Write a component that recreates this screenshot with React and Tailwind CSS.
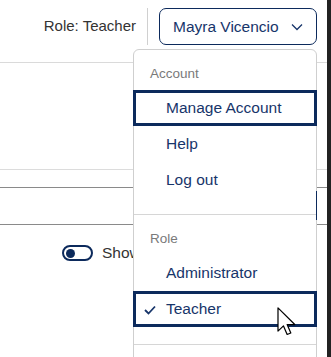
import React from "react";

const navy = "border-[#0c2a5c]";

const MenuHeader = ({ label }) => (
    <div className="pl-[16px] pt-[15px] pb-[8px] text-[13.5px] leading-[17px] text-[#7a7a7a]">{label}</div>
);

const MenuItem = ({ label, selected, checked }) => (
    <div
        className={`relative -mx-px h-[36px] flex items-center pl-[30px] text-[15.5px] text-[#17356a] border-[3px] ${
            selected ? navy : "border-transparent"
        }`}
    >
        {checked && (
            <svg className="absolute left-[8px] top-[11px]" width="12" height="10" viewBox="0 0 12 10">
                <polyline points="1,5 4.5,8.5 11,1.5" fill="none" stroke="#17356a" strokeWidth="1.8" />
            </svg>
        )}
        {label}
    </div>
);

const Cursor = () => (
    <svg className="absolute left-[277px] top-[307px]" width="20" height="29" viewBox="0 0 13 19">
        <path d="M0.6 0.6 L0.6 15.8 L4.2 12.4 L6.6 18 L9 17 L6.6 11.5 L11.6 11.5 Z" fill="#fff" stroke="#000" strokeWidth="0.8" strokeLinejoin="round" />
    </svg>
);

export default function App() {
    return (
        <div className="relative w-[331px] h-[357px] overflow-hidden bg-white flex font-['Liberation_Sans',Arial,sans-serif]">
            <div className="flex-1 flex flex-col">
                {/* top bar */}
                <div className="h-[63px] border-b border-[#dadada] flex items-start justify-end pt-[8px] pr-[10px]">
                    <div className="h-[37px] flex items-center text-[15px] text-[#333]">Role: Teacher</div>
                    <div className="w-px h-[37px] bg-[#d0d0d0] mx-[11px]" />
                    <button className={`h-[37px] w-[158px] border-[1.5px] ${navy} rounded-[7px] flex items-center pl-[13px] text-[15.5px] text-[#17356a]`}>
                        Mayra Vicencio
                        <svg className="ml-[12px]" width="12" height="8" viewBox="0 0 12 8">
                            <polyline points="1,1.5 6,6.5 11,1.5" fill="none" stroke="#17356a" strokeWidth="1.3" />
                        </svg>
                    </button>
                </div>

                {/* page content behind the menu */}
                <div className="mt-[106px] border-t border-[#dcdcdc] h-[18px]" />
                <div className="border-t border-[#8a8a8a] h-[37px]" />
                <div className="border-t border-[#8a8a8a] pt-[20px] pl-[62px] flex items-center gap-[9px]">
                    <div className={`w-[31px] h-[16px] border-2 ${navy} rounded-full flex items-center px-[2px]`}>
                        <div className="w-[9px] h-[9px] rounded-full bg-[#0c2a5c]" />
                    </div>
                    <span className="text-[15.5px] leading-[16px] text-[#333]">Show</span>
                </div>
            </div>
            <div className="w-[4px] bg-[#222]" />

            {/* account dropdown */}
            <div className="absolute left-[133px] top-[49px] w-[184px] h-[330px] bg-white border border-[#cfcfcf] rounded-t-[6px]">
                <MenuHeader label="Account" />
                <MenuItem label="Manage Account" selected />
                <MenuItem label="Help" />
                <MenuItem label="Log out" />
                <div className="h-[16px]" />
                <div className="border-t border-[#d6d6d6]" />
                <MenuHeader label="Role" />
                <MenuItem label="Administrator" />
                <MenuItem label="Teacher" selected checked />
                <div className="h-[17px]" />
                <div className="border-t border-[#d6d6d6]" />
            </div>
            <div className="absolute left-[316px] top-[191px] w-px h-[29px] bg-[#0c2a5c]" />
            <Cursor />
        </div>
    );
}
